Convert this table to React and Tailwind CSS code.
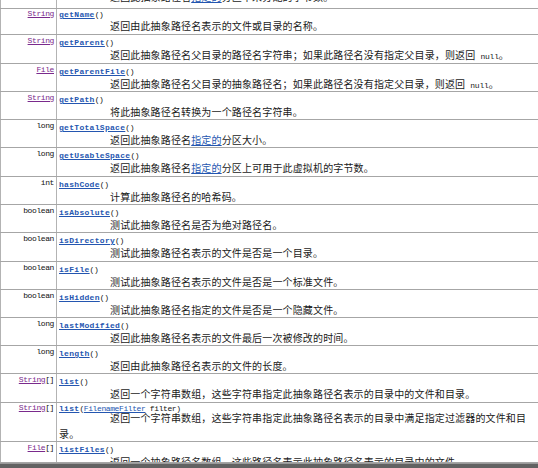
import React from "react";

const mono = "font-['Liberation_Mono','DejaVu_Sans_Mono',monospace]";
const cjk = "font-['Noto_Sans_CJK_SC','Noto_Sans',sans-serif]";

const TypeLink = ({ children }) => (
  <span className="text-[#7a2a8c] underline decoration-[#7a2a8c]">{children}</span>
);

const Spec = ({ children }) => (
  <span className="text-[#2456b0] underline decoration-[#2456b0]">{children}</span>
);

const Null = () => (
  <span className={`${mono} ml-[5px] text-[8px] tracking-[-0.2px]`}>null</span>
);

// 每一行的高度按截图量出来的
const rows = [
  {
    type: <TypeLink>String</TypeLink>,
    name: "getName",
    desc: "返回由此抽象路径名表示的文件或目录的名称。",
    h: "h-[26px]",
    pt: "pt-[1px]",
    lpt: "pt-[0px]",
    mt: "-mt-[2px]",
  },
  {
    type: <TypeLink>String</TypeLink>,
    name: "getParent",
    desc: (
      <>
        返回此抽象路径名父目录的路径名字符串；如果此路径名没有指定父目录，则返回
        <Null />。
      </>
    ),
    h: "h-[29px]",
  },
  {
    type: <TypeLink>File</TypeLink>,
    name: "getParentFile",
    desc: (
      <>
        返回此抽象路径名父目录的抽象路径名；如果此路径名没有指定父目录，则返回
        <Null />。
      </>
    ),
    h: "h-[28px]",
  },
  {
    type: <TypeLink>String</TypeLink>,
    name: "getPath",
    desc: "将此抽象路径名转换为一个路径名字符串。",
    h: "h-[28px]",
  },
  {
    type: "long",
    name: "getTotalSpace",
    desc: (
      <>
        返回此抽象路径名<Spec>指定的</Spec>分区大小。
      </>
    ),
    h: "h-[28px]",
  },
  {
    type: "long",
    name: "getUsableSpace",
    desc: (
      <>
        返回此抽象路径名<Spec>指定的</Spec>分区上可用于此虚拟机的字节数。
      </>
    ),
    h: "h-[29px]",
  },
  { type: "int", name: "hashCode", desc: "计算此抽象路径名的哈希码。", h: "h-[28px]" },
  { type: "boolean", name: "isAbsolute", desc: "测试此抽象路径名是否为绝对路径名。", h: "h-[28px]" },
  {
    type: "boolean",
    name: "isDirectory",
    desc: "测试此抽象路径名表示的文件是否是一个目录。",
    h: "h-[29px]",
  },
  {
    type: "boolean",
    name: "isFile",
    desc: "测试此抽象路径名表示的文件是否是一个标准文件。",
    h: "h-[28px]",
  },
  {
    type: "boolean",
    name: "isHidden",
    desc: "测试此抽象路径名指定的文件是否是一个隐藏文件。",
    h: "h-[28px]",
  },
  {
    type: "long",
    name: "lastModified",
    desc: "返回此抽象路径名表示的文件最后一次被修改的时间。",
    h: "h-[28px]",
  },
  { type: "long", name: "length", desc: "返回由此抽象路径名表示的文件的长度。", h: "h-[28px]" },
  {
    type: (
      <>
        <TypeLink>String</TypeLink>[]
      </>
    ),
    name: "list",
    desc: "返回一个字符串数组，这些字符串指定此抽象路径名表示的目录中的文件和目录。",
    h: "h-[29px]",
  },
  {
    type: (
      <>
        <TypeLink>String</TypeLink>[]
      </>
    ),
    name: "list",
    args: (
      <>
        (<span className="text-[#2456b0] underline decoration-[#2456b0]">FilenameFilter</span> filter)
      </>
    ),
    desc: "返回一个字符串数组，这些字符串指定此抽象路径名表示的目录中满足指定过滤器的文件和目录。",
    h: "h-[39px]",
    pt: "pt-[1px]",
    lpt: "pt-[0px]",
    mt: "-mt-[4px]",
  },
  {
    type: (
      <>
        <TypeLink>File</TypeLink>[]
      </>
    ),
    name: "listFiles",
    desc: "返回一个抽象路径名数组，这些路径名表示此抽象路径名表示的目录中的文件。",
    h: "flex-1 min-h-0",
  },
];

const Row = ({ row, extra = "" }) => (
  <div
    className={`flex shrink-0 overflow-hidden border-b border-[#a6a6a6] ${row.h} ${extra}`}
  >
    <div
      className={`w-[57px] shrink-0 border-l border-r border-[#b3b3b3] pr-[2px] text-right ${mono} text-[8px] leading-[10px] tracking-[-0.4px] text-[#111] ${
        row.lpt || "pt-[1px]"
      }`}
    >
      {row.type}
    </div>
    <div className={`flex-1 min-w-0 pl-[2px] pr-[4px] ${row.pt || "pt-[3px]"}`}>
      <div className={`${mono} text-[8px] leading-[10px] text-[#111] whitespace-nowrap`}>
        <b className="font-bold tracking-[0.3px] text-[#2456b0] underline decoration-[#2456b0]">
          {row.name}
        </b>
        <span className="tracking-[-0.4px]">{row.args || "()"}</span>
      </div>
      <div
        className={`${cjk} ${row.mt || "-mt-[1px]"} indent-[51px] text-[10px] leading-[16px] tracking-[0.15px] text-[#1a1a1a]`}
      >
        {row.desc}
      </div>
    </div>
  </div>
);

export default function App() {
  const top = {
    type: "long",
    name: "getFreeSpace",
    desc: (
      <>
        返回此抽象路径名<Spec>指定的</Spec>分区中未分配的字节数。
      </>
    ),
    h: "h-[28px]",
    mt: "-mt-[5px]",
  };

  return (
    <div className="w-[538px] h-[468px] overflow-hidden bg-white flex flex-col">
      <Row row={top} extra="-mt-[19px]" />
      {rows.map((r, i) => (
        <Row key={i} row={r} />
      ))}
      <div className="h-[5px] shrink-0 bg-[#626262] border-t border-[#9a9a9a]" />
    </div>
  );
}
